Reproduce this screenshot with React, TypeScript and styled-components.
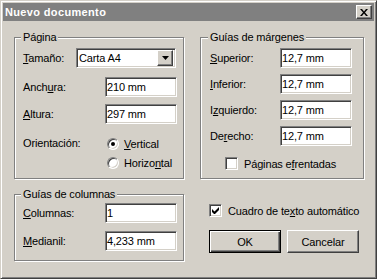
import React from 'react';
import styled, { createGlobalStyle, css } from 'styled-components';

const GlobalStyle = createGlobalStyle`
  html, body {
    margin: 0;
    padding: 0;
    background: #d4d0c8;
  }
  body {
    font-family: "Liberation Sans", Arial, sans-serif;
    font-size: 11px;
    letter-spacing: -0.15px;
    color: #000;
  }
`;

const sunken = css`
  box-sizing: border-box;
  border: 1px solid;
  border-color: #808080 #fff #fff #808080;
  box-shadow: inset 1px 1px 0 #404040, inset -1px -1px 0 #d4d0c8;
  background: #fff;
`;

const raised = css`
  box-sizing: border-box;
  border: 1px solid;
  border-color: #fff #404040 #404040 #fff;
  box-shadow: inset -1px -1px 0 #808080, inset 1px 1px 0 #d4d0c8;
  background: #d4d0c8;
`;

const Window = styled.div`
  box-sizing: border-box;
  width: 377px;
  height: 279px;
  padding: 2px;
  border: 1px solid;
  border-color: #d4d0c8 #404040 #404040 #d4d0c8;
  box-shadow: inset 1px 1px 0 #fff, inset -1px -1px 0 #808080;
  background: #d4d0c8;
`;

const TitleBar = styled.div`
  height: 18px;
  background: #808080;
  display: flex;
  align-items: center;
  justify-content: space-between;
  padding: 0 2px 0 2px;
`;

const Title = styled.span`
  color: #fff;
  font-weight: bold;
  font-size: 11px;
  letter-spacing: 0.35px;
`;

const CloseBtn = styled.div`
  ${raised};
  width: 16px;
  height: 14px;
  display: flex;
  align-items: center;
  justify-content: center;
`;

const Body = styled.div`
  display: grid;
  grid-template-columns: 170px 164px;
  column-gap: 16px;
  padding: 16px 0 0 11px;
`;

const Column = styled.div`
  display: flex;
  flex-direction: column;
`;

const Group = styled.div<{ $h: number; $mt?: number; $pt: number; $pl: number }>`
  position: relative;
  box-sizing: border-box;
  height: ${p => p.$h}px;
  margin-top: ${p => p.$mt ?? 0}px;
  padding: ${p => p.$pt}px 0 0 ${p => p.$pl}px;
  border: 1px solid #808080;
  box-shadow: 1px 1px 0 #fff, inset 1px 1px 0 #fff;
  display: flex;
  flex-direction: column;
`;

const Legend = styled.span<{ $left: number }>`
  position: absolute;
  top: -7px;
  left: ${p => p.$left}px;
  padding: 0 2px;
  line-height: 13px;
  background: #d4d0c8;
`;

const Row = styled.div<{ $h?: number; $mt?: number }>`
  display: flex;
  align-items: center;
  height: ${p => p.$h ?? 20}px;
  margin-top: ${p => p.$mt ?? 0}px;
`;

const Label = styled.span<{ $w: number; $top?: boolean }>`
  width: ${p => p.$w}px;
  flex: none;
  ${p =>
    p.$top &&
    css`
      align-self: flex-start;
      line-height: 19px;
    `}
`;

const Field = styled.div<{ $w?: number }>`
  ${sunken};
  width: ${p => p.$w ?? 72}px;
  height: 20px;
  padding-left: 1px;
  display: flex;
  align-items: center;
`;

const Select = styled.div`
  ${sunken};
  width: 100px;
  height: 20px;
  padding: 2px 2px 2px 2px;
  display: flex;
  align-items: center;
  justify-content: space-between;
`;

const DropBtn = styled.div`
  ${raised};
  width: 16px;
  height: 16px;
  display: flex;
  align-items: center;
  justify-content: center;
`;

const RadioList = styled.div`
  display: flex;
  flex-direction: column;
`;

const Option = styled.div`
  display: flex;
  align-items: center;
  height: 19px;
  gap: 5px;
`;

const Radio = styled.span<{ $on?: boolean }>`
  position: relative;
  box-sizing: border-box;
  width: 12px;
  height: 12px;
  border-radius: 50%;
  border: 1px solid;
  border-color: #808080 #fff #fff #808080;
  box-shadow: inset 1px 1px 0 #404040, inset -1px -1px 0 #d4d0c8;
  background: #fff;
  ${p =>
    p.$on &&
    css`
      &::after {
        content: '';
        position: absolute;
        left: 3px;
        top: 3px;
        width: 4px;
        height: 4px;
        border-radius: 50%;
        background: #000;
      }
    `}
`;

const CheckRow = styled.div<{ $ml: number; $mt: number }>`
  display: flex;
  align-items: center;
  gap: 6px;
  height: 13px;
  margin: ${p => p.$mt}px 0 0 ${p => p.$ml}px;
`;

const Check = styled.span`
  ${sunken};
  width: 13px;
  height: 13px;
  display: flex;
  align-items: center;
  justify-content: center;
`;

const Buttons = styled.div`
  display: flex;
  gap: 6px;
  margin: 13px 0 0 9px;
`;

const Button = styled.div<{ $default?: boolean }>`
  ${raised};
  width: 72px;
  height: 23px;
  display: flex;
  align-items: center;
  justify-content: center;
  ${p =>
    p.$default &&
    css`
      border: 1px solid #000;
      box-shadow: inset 1px 1px 0 #fff, inset -1px -1px 0 #404040,
        inset -2px -2px 0 #808080;
    `}
`;

const CheckMark = () => (
  <svg width="7" height="7" viewBox="0 0 7 7">
    <path d="M0 2v3l2 2h1l4-4V0L2.5 4.5Z" fill="#000" />
  </svg>
);

export default function App() {
  return (
    <>
      <GlobalStyle />
      <Window>
        <TitleBar>
          <Title>Nuevo documento</Title>
          <CloseBtn>
            <svg width="8" height="7" viewBox="0 0 8 7">
              <path d="M0 0h2l2 2.5L6 0h2L5 3.5 8 7H6L4 4.5 2 7H0l3-3.5Z" fill="#000" />
            </svg>
          </CloseBtn>
        </TitleBar>
        <Body>
          <Column>
            <Group $h={142} $pt={10} $pl={8}>
              <Legend $left={6}>Página</Legend>
              <Row>
                <Label $w={53}>
                  <u>T</u>amaño:
                </Label>
                <Select>
                  <span>Carta A4</span>
                  <DropBtn>
                    <svg width="7" height="4" viewBox="0 0 7 4">
                      <path d="M0 0h7L3.5 4Z" fill="#000" />
                    </svg>
                  </DropBtn>
                </Select>
              </Row>
              <Row $mt={9}>
                <Label $w={82}>
                  Anch<u>u</u>ra:
                </Label>
                <Field>210 mm</Field>
              </Row>
              <Row $mt={7}>
                <Label $w={82}>
                  <u>A</u>ltura:
                </Label>
                <Field>297 mm</Field>
              </Row>
              <Row $h={38} $mt={10}>
                <Label $w={84} $top>
                  Orientación:
                </Label>
                <RadioList>
                  <Option>
                    <Radio $on />
                    <span>
                      <u>V</u>ertical
                    </span>
                  </Option>
                  <Option>
                    <Radio />
                    <span>
                      Horizo<u>n</u>tal
                    </span>
                  </Option>
                </RadioList>
              </Row>
            </Group>
            <Group $h={67} $mt={15} $pt={8} $pl={8}>
              <Legend $left={6}>Guías de columnas</Legend>
              <Row>
                <Label $w={82}>
                  <u>C</u>olumnas:
                </Label>
                <Field>1</Field>
              </Row>
              <Row $mt={8}>
                <Label $w={82}>
                  <u>M</u>edianil:
                </Label>
                <Field>4,233 mm</Field>
              </Row>
            </Group>
          </Column>
          <Column>
            <Group $h={142} $pt={10} $pl={9}>
              <Legend $left={7}>Guías de márgenes</Legend>
              <Row>
                <Label $w={70}>
                  <u>S</u>uperior:
                </Label>
                <Field>12,7 mm</Field>
              </Row>
              <Row $mt={6}>
                <Label $w={70}>
                  <u>I</u>nferior:
                </Label>
                <Field>12,7 mm</Field>
              </Row>
              <Row $mt={6}>
                <Label $w={70}>
                  I<u>z</u>quierdo:
                </Label>
                <Field>12,7 mm</Field>
              </Row>
              <Row $mt={6}>
                <Label $w={70}>
                  De<u>r</u>echo:
                </Label>
                <Field>12,7 mm</Field>
              </Row>
              <CheckRow $ml={15} $mt={11}>
                <Check />
                <span>
                  Páginas e<u>f</u>rentadas
                </span>
              </CheckRow>
            </Group>
            <CheckRow $ml={9} $mt={25}>
              <Check>
                <CheckMark />
              </Check>
              <span>
                Cuadro de te<u>x</u>to automático
              </span>
            </CheckRow>
            <Buttons>
              <Button $default>OK</Button>
              <Button>Cancelar</Button>
            </Buttons>
          </Column>
        </Body>
      </Window>
    </>
  );
}
